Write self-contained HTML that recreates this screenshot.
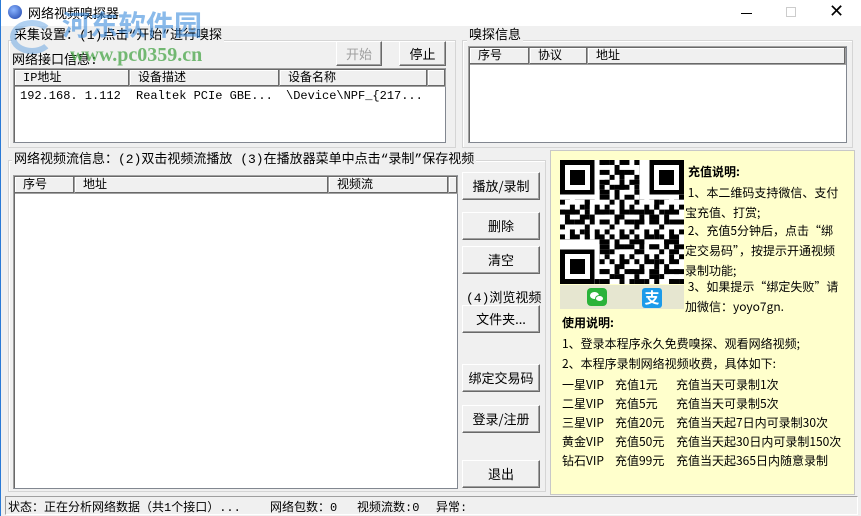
<!DOCTYPE html>
<html><head><meta charset="utf-8">
<style>
*{box-sizing:border-box;margin:0;padding:0}
body{width:861px;height:516px;overflow:hidden;background:#f0f0f0;font-family:"Liberation Mono","Noto Sans CJK SC",monospace;font-size:12px;color:#000;position:relative}
.a{position:absolute}
.title{left:0;top:0;width:861px;height:26px;background:#fff;border-left:1px solid #2a7ad6}
.win{left:0;top:26px;width:1px;height:490px;background:#2a7ad6}
.grp{position:absolute;border:1px solid #d5d5d5;box-shadow:inset 1px 1px 0 #fff}
.glab{position:absolute;background:#f0f0f0;padding:0 2px;white-space:nowrap;line-height:14px}
.list{position:absolute;background:#fff;border:1px solid #828790;border-top-color:#a0a0a0;border-left-color:#a0a0a0;box-shadow:inset 1px 1px 0 #696969}
.hdr{position:absolute;top:1px;height:17px;background:#f0f0f0;border-right:1px solid #a0a0a0;border-bottom:1px solid #a0a0a0;box-shadow:inset -1px -1px 0 #696969,inset 1px 1px 0 #fff;padding-left:8px;line-height:16px;white-space:nowrap}
.btn{position:absolute;width:78px;height:28px;background:#f0f0f0;border:1px solid #fff;border-right-color:#696969;border-bottom-color:#696969;box-shadow:inset -1px -1px 0 #a0a0a0;text-align:center;line-height:26px;font-size:13px;font-family:"Noto Sans CJK SC",sans-serif}
.yp{left:550px;top:150px;width:305px;height:345px;background:#ffffcc;border:1px solid #c8c8c8;font-family:"Noto Sans CJK SC",sans-serif;font-size:12px;line-height:18px}
.t{position:absolute;white-space:nowrap}
</style></head><body>
<div class="a title"></div>
<div class="a win"></div>
<div class="a" style="left:8px;top:5px;width:14px;height:14px;border-radius:50%;background:radial-gradient(circle at 40% 35%,#8ab4ff,#1a3fa8)"></div>
<div class="t" style="left:28px;top:3px;font-family:'Noto Sans CJK SC',sans-serif;font-size:13px">网络视频嗅探器</div>
<div class="a" style="left:741px;top:13px;width:11px;height:1px;background:#000"></div>
<div class="a" style="left:786px;top:7px;width:10px;height:10px;border:1px solid #ccc"></div>
<div class="t" style="left:829px;top:1px;font-size:18px;font-family:'DejaVu Sans',sans-serif;font-weight:200">✕</div>

<!-- group 1 -->
<div class="grp" style="left:8px;top:40px;width:448px;height:108px"></div>
<div class="glab" style="left:12px;top:29px;font-size:13px">采集设置：(1)点击“开始”进行嗅探</div>
<div class="t" style="left:12px;top:49px;font-size:13px">网络接口信息:</div>
<div class="btn" style="left:336px;top:41px;width:46px;height:25px;line-height:23px;color:#a0a0a0">开始</div>
<div class="btn" style="left:399px;top:41px;width:47px;height:25px;line-height:23px">停止</div>
<div class="list" style="left:13px;top:68px;width:433px;height:75px">
 <div class="hdr" style="left:1px;width:115px">IP地址</div>
 <div class="hdr" style="left:116px;width:150px">设备描述</div>
 <div class="hdr" style="left:266px;width:148px">设备名称</div>
 <div class="hdr" style="left:414px;width:18px"></div>
 <div class="t" style="left:6px;top:20px">192.168.  1.112</div>
 <div class="t" style="left:122px;top:20px">Realtek PCIe GBE...</div>
 <div class="t" style="left:272px;top:20px">\Device\NPF_{217...</div>
</div>
<!-- group 2 -->
<div class="grp" style="left:462px;top:40px;width:391px;height:108px"></div>
<div class="glab" style="left:467px;top:29px;font-size:13px">嗅探信息</div>
<div class="list" style="left:468px;top:46px;width:379px;height:97px">
 <div class="hdr" style="left:1px;width:60px">序号</div>
 <div class="hdr" style="left:61px;width:58px">协议</div>
 <div class="hdr" style="left:119px;width:258px">地址</div>
</div>
<!-- group 3 -->
<div class="grp" style="left:8px;top:160px;width:538px;height:332px"></div>
<div class="glab" style="left:12px;top:153px;font-size:13px">网络视频流信息：(2)双击视频流播放 (3)在播放器菜单中点击“录制”保存视频</div>
<div class="list" style="left:13px;top:175px;width:445px;height:314px">
 <div class="hdr" style="left:1px;width:60px">序号</div>
 <div class="hdr" style="left:61px;width:254px">地址</div>
 <div class="hdr" style="left:315px;width:120px">视频流</div>
 <div class="hdr" style="left:435px;width:9px"></div>
</div>
<div class="btn" style="left:462px;top:172px">播放/录制</div>
<div class="btn" style="left:462px;top:212px">删除</div>
<div class="btn" style="left:462px;top:246px">清空</div>
<div class="t" style="left:466px;top:287px;font-size:13px">(4)浏览视频</div>
<div class="btn" style="left:462px;top:305px">文件夹...</div>
<div class="btn" style="left:462px;top:364px">绑定交易码</div>
<div class="btn" style="left:462px;top:405px">登录/注册</div>
<div class="btn" style="left:462px;top:460px">退出</div>

<!-- yellow panel -->
<div class="a yp">
 <svg class="a" style="left:9px;top:9px" width="124" height="124" viewBox="0 0 25 25" shape-rendering="crispEdges">
  <rect width="25" height="25" fill="#fff"/>
  <defs><pattern id="p" width="5" height="5" patternUnits="userSpaceOnUse">
   <rect x="0" y="0" width="1" height="1"/><rect x="2" y="0" width="2" height="1"/><rect x="1" y="1" width="1" height="2"/><rect x="3" y="2" width="2" height="1"/><rect x="0" y="3" width="1" height="1"/><rect x="2" y="4" width="1" height="1"/><rect x="4" y="4" width="1" height="1"/>
  </pattern><pattern id="q" width="7" height="6" patternUnits="userSpaceOnUse"><rect x="1" y="0" width="2" height="1"/><rect x="5" y="2" width="1" height="2"/><rect x="0" y="4" width="3" height="1"/><rect x="4" y="5" width="2" height="1"/></pattern></defs>
  <rect width="25" height="25" fill="url(#p)"/><rect width="25" height="25" fill="url(#q)"/>
  <g><rect x="0" y="0" width="8" height="8" fill="#fff"/><rect x="0" y="0" width="7" height="7"/><rect x="1" y="1" width="5" height="5" fill="#fff"/><rect x="2" y="2" width="3" height="3"/></g>
  <g transform="translate(17,0)"><rect x="-1" y="0" width="8" height="8" fill="#fff"/><rect x="1" y="0" width="7" height="7"/><rect x="2" y="1" width="5" height="5" fill="#fff"/><rect x="3" y="2" width="3" height="3"/></g>
  <g transform="translate(0,17)"><rect x="0" y="-1" width="8" height="8" fill="#fff"/><rect x="0" y="1" width="7" height="7"/><rect x="1" y="2" width="5" height="5" fill="#fff"/><rect x="2" y="3" width="3" height="3"/></g>
 </svg>
 <div class="a" style="left:9px;top:134px;width:124px;height:24px;background:#e6e6d0"></div>
 <div class="a" style="left:36px;top:137px;width:20px;height:18px;background:#2bb33a;border-radius:4px"><div class="a" style="left:3px;top:4px;width:9px;height:7px;border-radius:50%;background:#fff"></div><div class="a" style="left:8px;top:7px;width:9px;height:7px;border-radius:50%;background:#fff;border:1px solid #2bb33a"></div></div>
 <div class="a" style="left:91px;top:137px;width:20px;height:20px;background:#1c9bea;border-radius:3px;color:#fff;font-size:15px;line-height:20px;text-align:center;font-weight:bold">支</div>
 <div class="t" style="left:137px;top:12px;font-weight:bold">充值说明:</div>
 <div class="t" style="left:134px;top:32px;line-height:20px">&nbsp;1、本二维码支持微信、支付<br>宝充值、打赏;</div>
 <div class="t" style="left:134px;top:70px;line-height:20px">&nbsp;2、充值5分钟后，点击“绑<br>定交易码”，按提示开通视频<br>录制功能;</div>
 <div class="t" style="left:134px;top:126px;line-height:20px">&nbsp;3、如果提示“绑定失败”请<br>加微信：yoyo7gn.</div>
 <div class="t" style="left:11px;top:163px;font-weight:bold">使用说明:</div>
 <div class="t" style="left:11px;top:183px;line-height:20px">1、登录本程序永久免费嗅探、观看网络视频;<br>2、本程序录制网络视频收费，具体如下:</div>
 <div class="t" style="left:11px;top:224px;line-height:19px">一星VIP<br>二星VIP<br>三星VIP<br>黄金VIP<br>钻石VIP</div>
 <div class="t" style="left:64px;top:224px;line-height:19px">充值1元<br>充值5元<br>充值20元<br>充值50元<br>充值99元</div>
 <div class="t" style="left:125px;top:224px;line-height:19px">充值当天可录制1次<br>充值当天可录制5次<br>充值当天起7日内可录制30次<br>充值当天起30日内可录制150次<br>充值当天起365日内随意录制</div>
</div>

<!-- status bar -->
<div class="a" style="left:5px;top:496px;width:853px;height:19px;border:1px solid #a0a0a0;border-right-color:#fff;border-bottom-color:#fff"></div>
<div class="t" style="left:8px;top:498px">状态：正在分析网络数据（共1个接口）...</div>
<div class="t" style="left:270px;top:498px">网络包数：0</div>
<div class="t" style="left:357px;top:498px">视频流数:0</div>
<div class="t" style="left:436px;top:498px">异常:</div>

<!-- watermark -->
<div class="t" style="left:62px;top:8px;font-family:'Noto Sans CJK SC',sans-serif;font-weight:bold;font-size:28px;line-height:32px;color:rgba(60,140,220,0.6)">河东软件园</div>
<div class="t" style="left:70px;top:44px;font-family:'Liberation Serif',serif;font-weight:bold;font-size:20px;color:rgba(60,160,60,0.7)">www.pc0359.cn</div>
<div class="a" style="left:10px;top:20px;width:44px;height:34px;border-radius:50%;border:6px solid rgba(60,140,220,0.4);border-right-color:transparent"></div>
</body></html>
